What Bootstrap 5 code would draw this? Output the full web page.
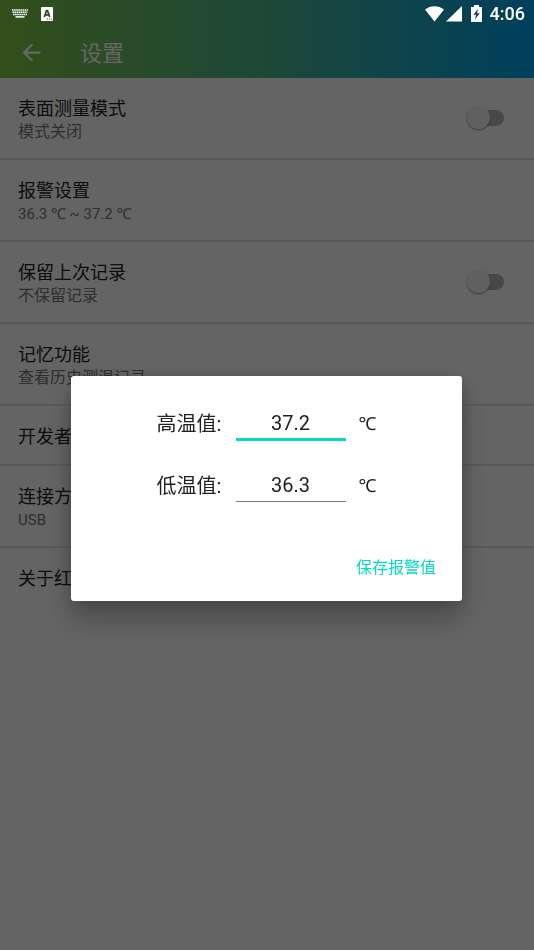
<!DOCTYPE html>
<html lang="zh-CN">
<head>
<meta charset="utf-8">
<meta name="viewport" content="width=device-width, initial-scale=1">
<title>设置</title>
<link href="https://cdn.jsdelivr.net/npm/bootstrap@5.3.0/dist/css/bootstrap.min.css" rel="stylesheet">
<style>
  body { font-family: Roboto, "Noto Sans CJK SC", sans-serif; background: #fafafa; color: #212121; min-height: 100vh; }
  .app-top { background: linear-gradient(90deg, #80c341, #4ab48c 50%, #00a0e9); padding-top: 27px; }
  .status-bar { z-index: 1070; height: 27px; padding: 0 9px 0 12px; color: #fff; }
  .clock { font-size: 18px; line-height: 27px; font-weight: 500; }
  .app-bar { height: 51px; padding-left: 18px; gap: 35px; color: #fff; }
  .app-title { font-size: 22px; line-height: 32px; font-weight: 400; padding-top: 2px; }
  .setting { padding: 18px 30px 15px 18px; border-bottom: 2px solid #e0e0e0; }
  .setting:last-child { border-bottom: 0; }
  .setting-name { font-size: 18px; line-height: 25px; }
  .setting-note { font-size: 16px; line-height: 22px; color: #757575; }
  .note-latin { font-size: 15px; }
  .degree { font-family: Roboto, "Noto Sans", "Noto Sans CJK SC", sans-serif; }
  .toggle { appearance: none; width: 36px; height: 16px; margin: 0 0 3px; border-radius: 8px; background: #b4b4b4; position: relative; }
  .toggle::before { content: ""; position: absolute; left: -1px; top: -4px; width: 23px; height: 23px; border-radius: 50%; background: #f1f1f1; box-shadow: 0 1px 2px rgba(0,0,0,.4); }
  .scrim { --bs-backdrop-opacity: .6; }
  .alarm { padding: 27px 72px 0 71px; }
  .alarm .modal-dialog { max-width: none; margin: 0; min-height: 100%; }
  .alarm .modal-content { border: 0; border-radius: 3px; box-shadow: 0 18px 28px rgba(0,0,0,.26), 0 2px 16px rgba(0,0,0,.16); }
  .alarm-form { padding: 26px 18px 15px 20px; font-size: 20px; line-height: 30px; }
  .field-row { height: 44px; margin-bottom: 18px; }
  .field-row label { width: 79px; }
  .temp { width: 110px; height: 32px; padding: 0 0 2px; border: 0; border-bottom: 1px solid #7d7d7d; border-radius: 0; background: transparent; text-align: center; color: inherit; outline: 0; }
  .temp-active { height: 34px; padding: 0; border-bottom: 3px solid #03dac5; }
  .unit { margin-left: 13px; width: 20px; font-size: 18px; }
  .save { margin-top: 24px; padding: 6px 8px; font-size: 16px; line-height: 24px; color: #03dac5; border: 0; }
</style>
<script src="https://cdn.jsdelivr.net/npm/bootstrap@5.3.0/dist/js/bootstrap.bundle.min.js"></script>
</head>
<body>
<div class="status-bar fixed-top d-flex align-items-center justify-content-between">
  <div class="d-flex align-items-center">
    <svg width="16" height="9" viewBox="0 0 16 9" fill="none" stroke="#fff" aria-hidden="true"><path d="M0 1H16" stroke-width="1.5" stroke-dasharray="1.6 .5"/><path d="M.5 3.300H15.500" stroke-width="1.500" stroke-dasharray="1.600 .500"/><path d="M1 5.600H15" stroke-width="1.500" stroke-dasharray="1.600 .500"/><path d="M3.500 7.900H12.500" stroke-width="1.500"/></svg>
    <svg width="25" height="14" viewBox="-13 0 25 14" aria-hidden="true"><path fill="#fff" d="M.5 0h11l.5.5v13l-.5.5H.5L0 13.500V.5z"/><path fill="none" stroke="#2b4a1c" stroke-width="1.700" d="M3.300 10 5.500 3.500h1L8.700 10M4.200 7.800h3.600"/><path stroke="#2b4a1c" d="M6 12h1M8 12h1M10 12h1"/></svg>
  </div>
  <div class="d-flex align-items-center">
    <svg width="57" height="18" viewBox="0 0 57 18" fill="#fff" aria-hidden="true"><path d="M0 4.500C5.500 0 13.500 0 19 4.500L9.500 16.500zM37 1v15.500H21zM46 2h3V0h5v2h3v15H46z"/><path fill="#0a4052" d="M53 3.800 48.500 9.700h2.600L50 14.500l4.700-6.200H52z"/></svg>
    <span class="clock ms-2">4:06</span>
  </div>
</div>
<header class="app-top">
  <div class="app-bar d-flex align-items-center">
    <button type="button" class="btn p-0 border-0 d-flex" aria-label="返回"><svg width="27" height="27" viewBox="0 0 24 24" fill="#fff"><path d="M20 11H7.830l5.590-5.590L12 4l-8 8 8 8 1.410-1.410L7.830 13H20z"/></svg></button>
    <h1 class="app-title mb-0">设置</h1>
  </div>
</header>
<main>
  <div class="setting d-flex align-items-center justify-content-between">
    <label for="surface"><span class="setting-name d-block">表面测量模式</span><span class="setting-note d-block">模式关闭</span></label>
    <input class="toggle" type="checkbox" role="switch" id="surface">
  </div>
  <div class="setting"><div class="setting-name">报警设置</div><div class="setting-note note-latin degree">36.3 ℃ ~ 37.2 ℃</div></div>
  <div class="setting d-flex align-items-center justify-content-between">
    <label for="keep"><span class="setting-name d-block">保留上次记录</span><span class="setting-note d-block">不保留记录</span></label>
    <input class="toggle" type="checkbox" role="switch" id="keep">
  </div>
  <div class="setting"><div class="setting-name">记忆功能</div><div class="setting-note">查看历史测温记录</div></div>
  <div class="setting"><div class="setting-name">开发者</div></div>
  <div class="setting"><div class="setting-name">连接方</div><div class="setting-note note-latin">USB</div></div>
  <div class="setting"><div class="setting-name">关于红</div></div>
</main>
<div class="modal-backdrop show scrim"></div>
<div class="modal d-block alarm" role="dialog" aria-modal="true" aria-label="报警设置">
  <div class="modal-dialog modal-dialog-centered">
    <form class="modal-content">
      <div class="alarm-form">
        <div class="field-row d-flex align-items-center justify-content-center"><label for="high">高温值:</label><input class="temp temp-active" id="high" type="text" inputmode="decimal" value="37.2"><span class="unit degree">℃</span></div>
        <div class="field-row d-flex align-items-center justify-content-center"><label for="low">低温值:</label><input class="temp" id="low" type="text" inputmode="decimal" value="36.3"><span class="unit degree">℃</span></div>
        <div class="text-end"><button type="button" class="btn save">保存报警值</button></div>
      </div>
    </form>
  </div>
</div>
</body>
</html>
